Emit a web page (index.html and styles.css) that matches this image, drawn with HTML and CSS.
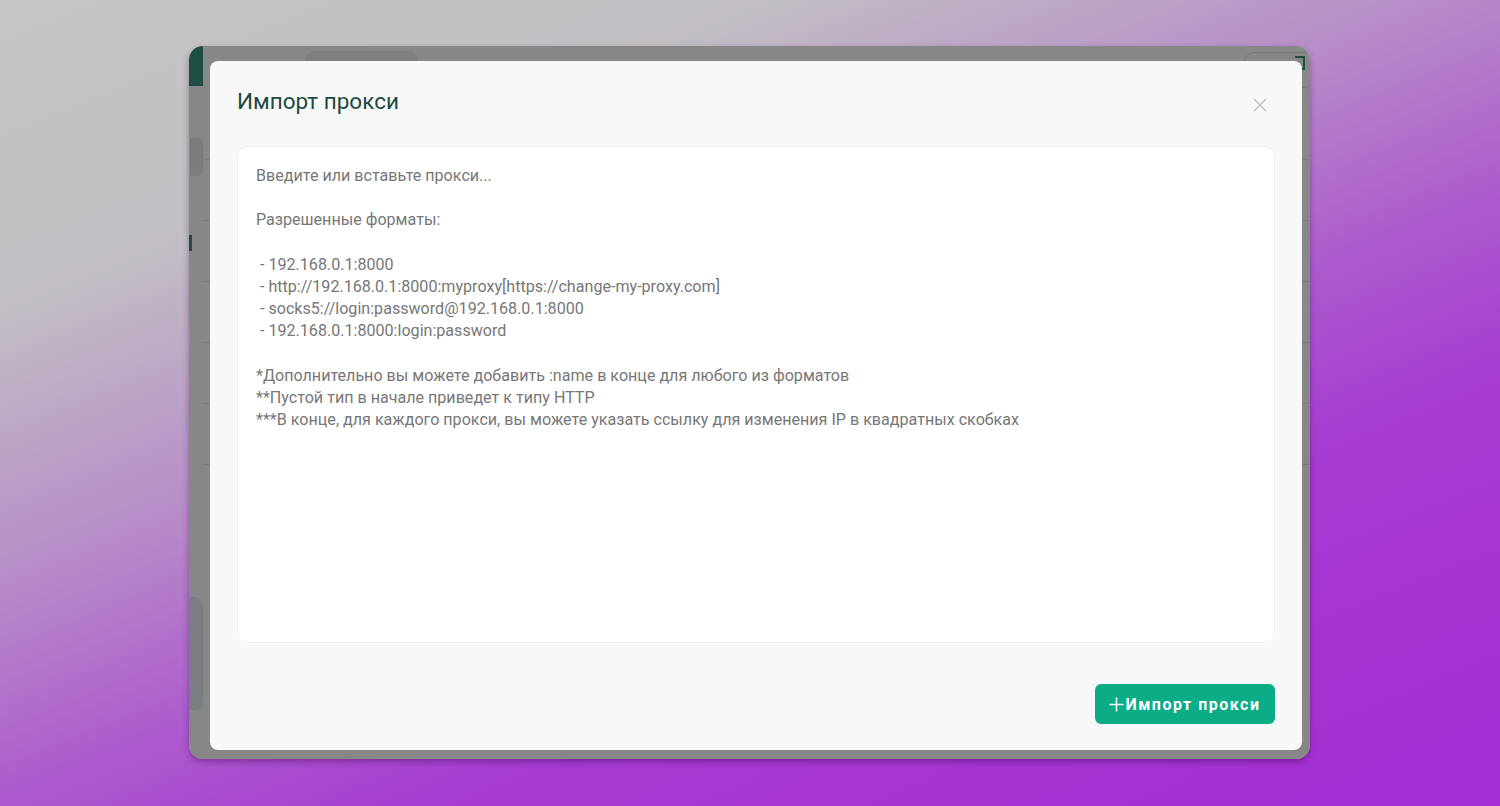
FILE: index.html
```html
<!DOCTYPE html>
<html lang="ru">
<head>
<meta charset="utf-8">
<title>Импорт прокси</title>
<link rel="stylesheet" href="styles.css">
</head>
<body>
<div class="window">
  <div class="app">
    <aside class="sidebar">
      <div class="logo"></div>
      <div class="side-item"></div>
      <div class="side-marker"></div>
      <div class="side-card"></div>
    </aside>
    <main class="main">
      <header class="topbar">
        <div class="pill"></div>
        <div class="top-btn"><span class="top-icon"></span></div>
      </header>
      <div class="rows">
        <div class="row"></div>
        <div class="row"></div>
        <div class="row"></div>
        <div class="row"></div>
        <div class="row"></div>
        <div class="row"></div>
      </div>
    </main>
  </div>
  <div class="overlay"></div>
  <div class="modal">
    <div class="modal-header">
      <h2 class="modal-title">Импорт прокси</h2>
      <button class="close" aria-label="Закрыть">
        <svg width="14" height="14" viewBox="0 0 14 14"><path d="M1 1L13 13M13 1L1 13" stroke="#bdbdbd" stroke-width="1.3" fill="none"/></svg>
      </button>
    </div>
    <textarea class="proxy-input" placeholder="Введите или вставьте прокси...&#10;&#10;Разрешенные форматы:&#10;&#10; - 192.168.0.1:8000&#10; - http://192.168.0.1:8000:myproxy[https://change-my-proxy.com]&#10; - socks5://login:password@192.168.0.1:8000&#10; - 192.168.0.1:8000:login:password&#10;&#10;*Дополнительно вы можете добавить :name в конце для любого из форматов&#10;**Пустой тип в начале приведет к типу HTTP&#10;***В конце, для каждого прокси, вы можете указать ссылку для изменения IP в квадратных скобках"></textarea>
    <div class="modal-footer">
      <button class="import-btn">
        <svg class="plus" width="15" height="15" viewBox="0 0 15 15"><path d="M7.5 0.5V14.5M0.5 7.5H14.5" stroke="#fff" stroke-width="1.5" fill="none"/></svg>
        <span>Импорт прокси</span>
      </button>
    </div>
  </div>
</div>
</body>
</html>
```
FILE: styles.css
```css
html, body {
  margin: 0;
  padding: 0;
}
body {
  width: 1500px;
  height: 806px;
  overflow: hidden;
  font-family: Roboto, "Noto Sans", Arial, sans-serif;
  background: linear-gradient(158deg, #c5c5c5 0%, #c2bec4 22%, #b68ac8 42%, #ad5ccd 56%, #a73ad2 70%, #a52dd3 100%);
  padding: 46px 0 0 189px;
  box-sizing: border-box;
}
.window {
  position: relative;
  width: 1121px;
  height: 713px;
  border-radius: 14px;
  overflow: hidden;
  background: #ffffff;
  box-shadow: 0 3px 6px rgba(40, 0, 60, 0.35);
}
.app {
  display: flex;
  height: 100%;
}
.sidebar {
  width: 14px;
  display: flex;
  flex-direction: column;
  flex: none;
}
.logo {
  height: 40px;
  background: #3a9180;
}
.side-item {
  margin-top: 52px;
  margin-left: 1px;
  height: 38px;
  border-radius: 0 6px 6px 0;
  background: #ebebeb;
}
.side-marker {
  margin-top: 59px;
  width: 3px;
  height: 16px;
  background: #3a9180;
}
.side-card {
  margin-top: 346px;
  height: 113px;
  border-radius: 0 8px 8px 0;
  background: #e6edf7;
}
.main {
  flex: 1;
  display: flex;
  flex-direction: column;
}
.topbar {
  height: 60px;
  display: flex;
  align-items: flex-start;
  justify-content: space-between;
  padding-top: 5px;
  box-sizing: border-box;
}
.pill {
  margin-left: 102px;
  width: 113px;
  height: 36px;
  border-radius: 10px;
  background: #efefef;
}
.top-btn {
  width: 70px;
  height: 36px;
  margin-top: 1px;
  margin-right: -4px;
  border: 1px solid #e2e2e2;
  border-radius: 10px;
  box-sizing: border-box;
  display: flex;
  justify-content: flex-end;
  align-items: center;
  padding-right: 8px;
}
.top-icon {
  width: 8px;
  height: 10px;
  border: 2px solid #3a9180;
  border-left: none;
  margin-top: -14px;
}
.rows {
  margin-top: 53px;
  display: flex;
  flex-direction: column;
}
.row {
  height: 60px;
  border-top: 1px solid #e8e8e8;
}
.overlay {
  position: absolute;
  inset: 0;
  background: rgba(0, 0, 0, 0.47);
}
.modal {
  position: absolute;
  left: 21px;
  top: 15px;
  width: 1092px;
  height: 689px;
  box-sizing: border-box;
  border-radius: 8px;
  background: #f8f8f8;
  padding: 0 27px 26px;
  display: flex;
  flex-direction: column;
}
.modal-header {
  height: 85px;
  flex: none;
  box-sizing: border-box;
  padding-top: 27px;
  display: flex;
  justify-content: space-between;
  align-items: flex-start;
}
.modal-title {
  margin: 0;
  font-size: 22.5px;
  line-height: 26px;
  font-weight: 400;
  color: #1d4a3f;
}
.close {
  margin: 10px 8px 0 0;
  padding: 0;
  border: none;
  background: none;
  width: 14px;
  height: 14px;
  display: block;
}
.close svg {
  display: block;
}
.proxy-input {
  flex: none;
  height: 497px;
  box-sizing: border-box;
  resize: none;
  outline: none;
  border: 1px solid #efefef;
  border-radius: 10px;
  background: #ffffff;
  padding: 18px 18px 17px;
  font-family: Roboto, "Noto Sans", Arial, sans-serif;
  font-size: 16.1px;
  line-height: 22.2px;
  color: #444;
  margin: 0;
}
.proxy-input::placeholder {
  color: #777777;
  opacity: 1;
}
.modal-footer {
  margin-top: 41px;
  display: flex;
  justify-content: flex-end;
}
.import-btn {
  width: 180px;
  height: 40px;
  border: none;
  border-radius: 6px;
  background: #0aad85;
  color: #ffffff;
  font-family: Roboto, "Noto Sans", Arial, sans-serif;
  font-size: 16px;
  font-weight: 700;
  letter-spacing: 1.5px;
  display: flex;
  align-items: center;
  justify-content: center;
  gap: 1px;
  padding: 0;
}
.plus {
  display: block;
}
```
